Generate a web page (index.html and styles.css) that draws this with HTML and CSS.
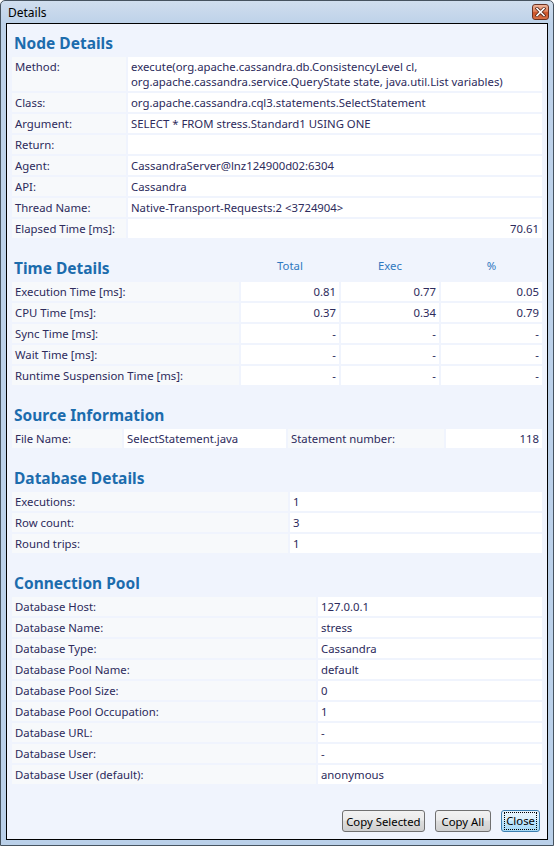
FILE: index.html
```html
<!DOCTYPE html>
<html lang="en">

<head>
  <meta charset="UTF-8" />
  <title>Details</title>
  <link rel="stylesheet" href="styles.css">
</head>

<body>
  <div class="window">
    <div class="titlebar">
      <span class="title">Details</span>
      <span class="close-btn">
        <svg width="11" height="10" viewBox="0 0 11 10">
          <path d="M2 1.5 L9 8.5 M9 1.5 L2 8.5" stroke="#5a2a1c" stroke-width="3.2" stroke-linecap="square" />
          <path d="M2 1.5 L9 8.5 M9 1.5 L2 8.5" stroke="#fff" stroke-width="1.6" stroke-linecap="square" />
        </svg>
      </span>
    </div>

    <div class="client">
      <div class="content">
        <!-- Node details -->
        <div class="section first">
          <h2>Node Details</h2>
          <div class="grid node-grid">
            <div class="label">Method:</div>
            <div class="value">execute(org.apache.cassandra.db.ConsistencyLevel cl, org.apache.cassandra.service.QueryState state, java.util.List variables)</div>
            <div class="label">Class:</div>
            <div class="value">org.apache.cassandra.cql3.statements.SelectStatement</div>
            <div class="label">Argument:</div>
            <div class="value">SELECT * FROM stress.Standard1 USING ONE</div>
            <div class="label">Return:</div>
            <div class="value"></div>
            <div class="label">Agent:</div>
            <div class="value">CassandraServer@lnz124900d02:6304</div>
            <div class="label">API:</div>
            <div class="value">Cassandra</div>
            <div class="label">Thread Name:</div>
            <div class="value">Native-Transport-Requests:2 &lt;3724904&gt;</div>
            <div class="label">Elapsed Time [ms]:</div>
            <div class="value num">70.61</div>
          </div>
        </div>

        <!-- Time details -->
        <div class="section">
          <div class="grid time-grid">
            <h2>Time Details</h2>
            <div class="colhead">Total</div>
            <div class="colhead">Exec</div>
            <div class="colhead">%</div>

            <div class="label">Execution Time [ms]:</div>
            <div class="value num">0.81</div>
            <div class="value num">0.77</div>
            <div class="value num">0.05</div>

            <div class="label">CPU Time [ms]:</div>
            <div class="value num">0.37</div>
            <div class="value num">0.34</div>
            <div class="value num">0.79</div>

            <div class="label">Sync Time [ms]:</div>
            <div class="value num">-</div>
            <div class="value num">-</div>
            <div class="value num">-</div>

            <div class="label">Wait Time [ms]:</div>
            <div class="value num">-</div>
            <div class="value num">-</div>
            <div class="value num">-</div>

            <div class="label">Runtime Suspension Time [ms]:</div>
            <div class="value num">-</div>
            <div class="value num">-</div>
            <div class="value num">-</div>
          </div>
        </div>

        <!-- Source info -->
        <div class="section">
          <h2>Source Information</h2>
          <div class="grid source-grid">
            <div class="label">File Name:</div>
            <div class="value">SelectStatement.java</div>
            <div class="label">Statement number:</div>
            <div class="value num">118</div>
          </div>
        </div>

        <!-- Database details -->
        <div class="section">
          <h2>Database Details</h2>
          <div class="grid db-grid">
            <div class="label">Executions:</div>
            <div class="value">1</div>
            <div class="label">Row count:</div>
            <div class="value">3</div>
            <div class="label">Round trips:</div>
            <div class="value">1</div>
          </div>
        </div>

        <!-- Connection pool -->
        <div class="section">
          <h2>Connection Pool</h2>
          <div class="grid pool-grid">
            <div class="label">Database Host:</div>
            <div class="value">127.0.0.1</div>
            <div class="label">Database Name:</div>
            <div class="value">stress</div>
            <div class="label">Database Type:</div>
            <div class="value">Cassandra</div>
            <div class="label">Database Pool Name:</div>
            <div class="value">default</div>
            <div class="label">Database Pool Size:</div>
            <div class="value">0</div>
            <div class="label">Database Pool Occupation:</div>
            <div class="value">1</div>
            <div class="label">Database URL:</div>
            <div class="value">-</div>
            <div class="label">Database User:</div>
            <div class="value">-</div>
            <div class="label">Database User (default):</div>
            <div class="value">anonymous</div>
          </div>
        </div>
      </div>

      <div class="buttons">
        <button class="btn btn-narrow">Copy Selected</button>
        <button class="btn btn-wide">Copy All</button>
        <button class="btn focused"><span class="focus-ring">Close</span></button>
      </div>
    </div>
  </div>
</body>

</html>
```

FILE: styles.css
```css
* {
  box-sizing: border-box;
}

html,
body {
  margin: 0;
}

body {
  width: 554px;
  height: 846px;
  overflow: hidden;
  font-family: "Noto Sans", "Open Sans", sans-serif;
  font-size: 11.35px;
  color: #2d2b5c;
}

/* Window frame */
.window {
  width: 554px;
  height: 846px;
  display: flex;
  flex-direction: column;
  border: 1px solid #46535f;
  border-radius: 5px 5px 0 0;
  background: linear-gradient(180deg, #d0deee 0%, #bed2e9 22px, #bad0e9 100%);
}

.titlebar {
  height: 22px;
  display: flex;
  align-items: center;
  justify-content: space-between;
  padding: 0 4px 0 7px;
}

.title {
  color: #000;
  font-size: 12px;
}

.close-btn {
  width: 17px;
  height: 16px;
  display: flex;
  align-items: center;
  justify-content: center;
  border: 1px solid #6b3222;
  border-radius: 3px;
  background: linear-gradient(180deg, #efb49a 0%, #e0825c 45%, #cc5328 55%, #d87146 100%);
}

.client {
  flex: 1;
  display: flex;
  flex-direction: column;
  margin: 0 5px 5px;
  padding: 0 5px;
  border: 1px solid #000;
  background: #f0f4fd;
}

/* Sections */
.section {
  margin-top: 19px;
}

.section.first {
  margin-top: 8px;
}

h2 {
  margin: 0 0 2px;
  padding-left: 2px;
  height: 23px;
  line-height: 23px;
  font-size: 15.5px;
  font-weight: bold;
  color: #1c6cad;
  white-space: nowrap;
}

.grid {
  display: grid;
  gap: 2px;
}

.grid h2 {
  margin: 0;
}

.node-grid {
  grid-template-columns: 114px 1fr;
}

.time-grid {
  grid-template-columns: 227px 98px 98px 1fr;
}

.source-grid {
  grid-template-columns: 110px 162px 156px 1fr;
}

.db-grid {
  grid-template-columns: 276px 1fr;
}

.pool-grid {
  grid-template-columns: 304px 1fr;
}

.label,
.value {
  padding: 2px 3px;
  line-height: 15px;
  min-height: 19px;
}

.label {
  background: #f7f9fb;
}

.value {
  background: #fff;
}

.num {
  text-align: right;
}

.colhead {
  text-align: center;
  color: #2f78c0;
  line-height: 15px;
  padding-top: 1px;
}

/* Buttons */
.buttons {
  margin-top: auto;
  display: flex;
  justify-content: flex-end;
  gap: 10px;
  padding: 0 2px 7px 0;
}

.btn {
  height: 22px;
  padding: 0 5px;
  font-family: "Noto Sans", "Open Sans", sans-serif;
  font-size: 11.35px;
  color: #000;
  border: 1px solid #707070;
  border-radius: 3px;
  background: linear-gradient(180deg, #f2f2f2 0%, #ebebeb 45%, #dddddd 50%, #cfcfcf 100%);
}

.btn-narrow {
  padding: 0 3px;
}

.btn-wide {
  padding: 0 6px;
}

.btn.focused {
  padding: 0 2px;
  border-color: #3c7fb1;
  background: linear-gradient(180deg, #eaf6fd 0%, #d9f0fc 45%, #bee6fd 50%, #a7d9f5 100%);
}

.focus-ring {
  display: block;
  padding: 0 1px;
  line-height: 16px;
  border: 1px dotted #000;
}
```
